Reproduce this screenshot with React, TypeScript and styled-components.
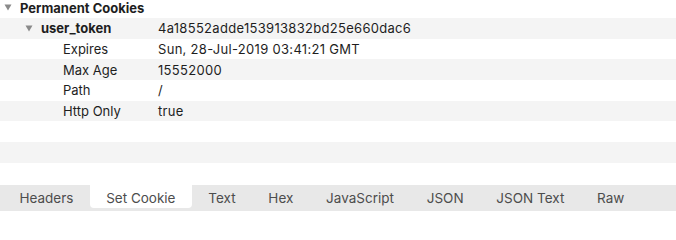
import React from "react";
import styled, { createGlobalStyle } from "styled-components";

const GlobalStyle = createGlobalStyle`
  html, body {
    margin: 0;
    padding: 0;
    background: #ffffff;
  }
  body {
    font-family: Inter, "Liberation Sans", Arial, sans-serif;
    -webkit-font-smoothing: antialiased;
  }
`;

const Window = styled.div`
  display: flex;
  flex-direction: column;
  width: 676px;
  height: 211px;
  overflow: hidden;
  background: #ffffff;
`;

const Outline = styled.div`
  flex: 1;
  overflow: hidden;
`;

const Rows = styled.div`
  display: flex;
  flex-direction: column;
  margin-top: -2.7px;
`;

const Row = styled.div<{ $striped: boolean }>`
  display: flex;
  align-items: center;
  height: 20.67px;
  flex-shrink: 0;
  background: ${(p) => (p.$striped ? "#f4f4f4" : "#ffffff")};
  font-size: 13px;
  color: #1e1e1e;
`;

const Disclosure = styled.span<{ $left: number }>`
  display: flex;
  align-items: center;
  width: 8px;
  margin-left: ${(p) => p.$left}px;
  margin-right: 8px;
  flex-shrink: 0;
`;

// the value column starts at x = 158; $used is what sits left of the cell
const NameCell = styled.span<{ $used: number; $left: number; $bold?: boolean }>`
  width: ${(p) => 158 - p.$used}px;
  padding-left: ${(p) => p.$left}px;
  box-sizing: border-box;
  font-weight: ${(p) => (p.$bold ? 700 : 400)};
  white-space: nowrap;
  flex-shrink: 0;
`;

const Group = styled.span`
  font-weight: 700;
  white-space: nowrap;
`;

const ValueCell = styled.span`
  white-space: nowrap;
  letter-spacing: 0.3px;
`;

const TabBar = styled.div`
  display: flex;
  height: 26px;
  flex-shrink: 0;
  margin-top: 2px;
  padding-left: 3px;
  background: #e8e8e8;
`;

const Tab = styled.div<{ $active?: boolean }>`
  display: flex;
  align-items: center;
  height: ${(p) => (p.$active ? "23px" : "26px")};
  padding: 0 16.4px;
  background: ${(p) => (p.$active ? "#ffffff" : "transparent")};
  border-radius: 0 0 4px 4px;
  font-size: 13.5px;
  color: #4d4d4d;
  white-space: nowrap;
`;

const TabLabel = styled.span<{ $shift: number }>`
  position: relative;
  top: ${(p) => p.$shift}px;
`;

const Triangle = () => (
  <svg width="8" height="7" viewBox="0 0 8 7">
    <path d="M0.5 0.5 L7.5 0.5 L4 6.5 Z" fill="#8a8a8a" />
  </svg>
);

type Line =
  | { kind: "group"; label: string }
  | { kind: "cookie"; name: string; value: string }
  | { kind: "attr"; name: string; value: string }
  | { kind: "empty" };

const lines: Line[] = [
  { kind: "group", label: "Permanent Cookies" },
  { kind: "cookie", name: "user_token", value: "4a18552adde153913832bd25e660dac6" },
  { kind: "attr", name: "Expires", value: "Sun, 28-Jul-2019 03:41:21 GMT" },
  { kind: "attr", name: "Max Age", value: "15552000" },
  { kind: "attr", name: "Path", value: "/" },
  { kind: "attr", name: "Http Only", value: "true" },
  { kind: "empty" },
  { kind: "empty" },
  { kind: "empty" },
];

const tabs = ["Headers", "Set Cookie", "Text", "Hex", "JavaScript", "JSON", "JSON Text", "Raw"];

export default function App() {
  return (
    <>
      <GlobalStyle />
      <Window>
        <Outline>
          <Rows>
            {lines.map((l, i) => (
              <Row key={i} $striped={i % 2 === 1}>
                {l.kind === "group" && (
                  <>
                    <Disclosure $left={4}>
                      <Triangle />
                    </Disclosure>
                    <Group>{l.label}</Group>
                  </>
                )}
                {l.kind === "cookie" && (
                  <>
                    <Disclosure $left={25}>
                      <Triangle />
                    </Disclosure>
                    <NameCell $used={41} $left={0} $bold>
                      {l.name}
                    </NameCell>
                    <ValueCell>{l.value}</ValueCell>
                  </>
                )}
                {l.kind === "attr" && (
                  <>
                    <NameCell $used={0} $left={63}>{l.name}</NameCell>
                    <ValueCell>{l.value}</ValueCell>
                  </>
                )}
              </Row>
            ))}
          </Rows>
        </Outline>
        <TabBar>
          {tabs.map((t) => (
            <Tab key={t} $active={t === "Set Cookie"}>
              <TabLabel $shift={t === "Set Cookie" ? 1.5 : 0}>{t}</TabLabel>
            </Tab>
          ))}
        </TabBar>
      </Window>
    </>
  );
}
